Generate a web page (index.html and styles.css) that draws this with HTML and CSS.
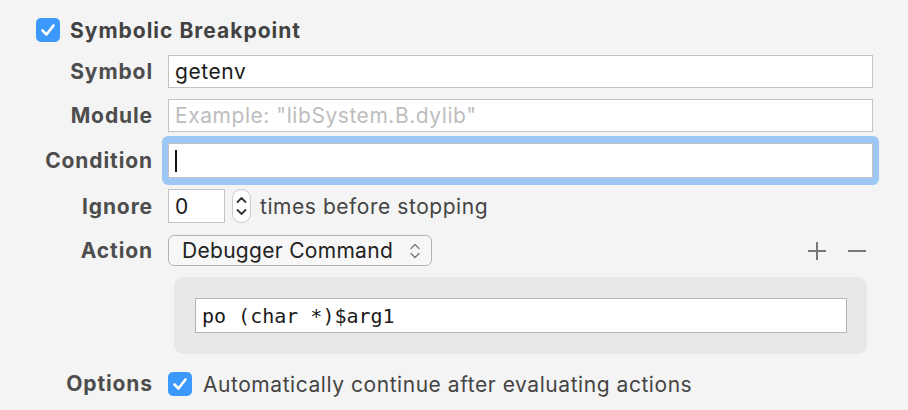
FILE: index.html
```html
<!DOCTYPE html>
<html>
<head>
<meta charset="utf-8">
<link rel="stylesheet" href="styles.css">
</head>
<body>
<div class="page">
  <div class="header">
    <span class="check"><svg viewBox="0 0 24 24" width="24" height="24"><path d="M6.5 12.5 L10.5 16.5 L17.5 7.5" fill="none" stroke="#fff" stroke-width="2.6" stroke-linecap="round" stroke-linejoin="round"/></svg></span>
    <span class="title">Symbolic Breakpoint</span>
  </div>
  <div class="form">
    <div class="label">Symbol</div>
    <div class="field">getenv</div>

    <div class="label">Module</div>
    <div class="field placeholder">Example: "libSystem.B.dylib"</div>

    <div class="label">Condition</div>
    <div class="focus"><div class="field tall"><span class="caret"></span></div></div>

    <div class="label">Ignore</div>
    <div class="ignore">
      <div class="field small">0</div>
      <div class="stepper"><svg viewBox="0 0 19 34" width="19" height="34"><path d="M5.5 13 L9.5 9 L13.5 13" fill="none" stroke="#333" stroke-width="1.8" stroke-linecap="round" stroke-linejoin="round"/><path d="M5.5 21 L9.5 25 L13.5 21" fill="none" stroke="#333" stroke-width="1.8" stroke-linecap="round" stroke-linejoin="round"/></svg></div>
      <span class="text">times before stopping</span>
    </div>

    <div class="label">Action</div>
    <div class="action">
      <div class="popup"><span>Debugger Command</span><svg viewBox="0 0 14 22" width="14" height="22"><path d="M3 8.5 L7 4.5 L11 8.5" fill="none" stroke="#777" stroke-width="1.3" stroke-linecap="round" stroke-linejoin="round"/><path d="M3 13.5 L7 17.5 L11 13.5" fill="none" stroke="#777" stroke-width="1.3" stroke-linecap="round" stroke-linejoin="round"/></svg></div>
      <div class="buttons">
        <svg viewBox="0 0 20 20" width="20" height="20"><path d="M10 1 V19 M1 10 H19" stroke="#777" stroke-width="2"/></svg>
        <svg viewBox="0 0 20 20" width="20" height="20"><path d="M1 10 H19" stroke="#777" stroke-width="2"/></svg>
      </div>
    </div>

    <div class="label"></div>
    <div class="box"><div class="field mono">po (char *)$arg1</div></div>

    <div class="label">Options</div>
    <div class="option">
      <span class="check"><svg viewBox="0 0 24 24" width="24" height="24"><path d="M6.5 12.5 L10.5 16.5 L17.5 7.5" fill="none" stroke="#fff" stroke-width="2.6" stroke-linecap="round" stroke-linejoin="round"/></svg></span>
      <span class="text">Automatically continue after evaluating actions</span>
    </div>
  </div>
</div>
</body>
</html>
```
FILE: styles.css
```css
html, body {
  margin: 0;
  padding: 0;
  background: #f4f4f4;
}
body {
  font-family: "Inter", "Liberation Sans", sans-serif;
  color: #4a4a4a;
}
.page {
  width: 908px;
  height: 410px;
  box-sizing: border-box;
  padding: 18px 35px 0 0;
}
.header {
  display: flex;
  align-items: center;
  gap: 10px;
  margin-left: 36px;
  height: 24px;
}
.check {
  width: 24px;
  height: 24px;
  border-radius: 5px;
  background: #3b99fc;
  display: block;
  flex: none;
}
.check svg { display: block; }
.title {
  font-size: 21px;
  font-weight: 700;
  color: #424242;
  letter-spacing: 1px;
}
.form {
  display: grid;
  grid-template-columns: 152px 1fr;
  column-gap: 16px;
  row-gap: 11px;
  align-items: center;
  margin-top: 13px;
}
.label {
  text-align: right;
  font-size: 21px;
  font-weight: 700;
  color: #4d4d4d;
  letter-spacing: 0.9px;
  margin-right: -1px;
}
.field {
  height: 33px;
  box-sizing: border-box;
  background: #fff;
  border: 1px solid #c3c3c3;
  font-size: 21px;
  letter-spacing: 0.55px;
  color: #1a1a1a;
  padding: 0 6px;
  display: flex;
  align-items: center;
}
.field.placeholder { color: #bdbdbd; }
.field.tall { height: 35px; }
.focus {
  margin: 0 -6px;
  border: 6px solid #9dc7f5;
  border-radius: 6px;
  margin-top: -7px;
  margin-bottom: -7px;
  border-top-width: 7px;
  border-bottom-width: 7px;
}
.caret {
  width: 2px;
  height: 22px;
  background: #111;
}
.ignore {
  display: flex;
  align-items: center;
  height: 34px;
}
.field.small {
  width: 57px;
  height: 34px;
}
.stepper {
  width: 19px;
  height: 34px;
  box-sizing: border-box;
  margin-left: 7px;
  border: 1px solid #cbcbcb;
  border-radius: 9px;
  background: #fff;
  position: relative;
}
.stepper svg {
  position: absolute;
  left: -1px;
  top: -1px;
}
.text {
  font-size: 21px;
  letter-spacing: 0.55px;
  color: #444;
  margin-left: 9px;
}
.option .text { margin-left: 11px; }
.action {
  display: flex;
  align-items: center;
  justify-content: space-between;
  margin-top: 1px;
}
.popup {
  width: 264px;
  height: 31px;
  box-sizing: border-box;
  border: 1px solid #b3b3b3;
  border-radius: 6px;
  background: #f7f7f7;
  display: flex;
  align-items: center;
  justify-content: space-between;
  padding: 0 9px 0 13px;
  font-size: 21px;
  letter-spacing: 0.3px;
  color: #222;
}
.popup svg { display: block; }
.buttons {
  display: flex;
  gap: 20px;
  margin-right: 6px;
}
.buttons svg { display: block; }
.box {
  margin: 0 6px;
  height: 77px;
  box-sizing: border-box;
  background: #e8e8e8;
  border-radius: 9px;
  padding: 21px 20px 0 21px;
}
.field.mono {
  height: 35px;
  font-family: "DejaVu Sans Mono", "Liberation Mono", monospace;
  font-size: 20px;
  letter-spacing: 0;
  padding-left: 6px;
  border-color: #b5b5b5;
}
.option {
  display: flex;
  align-items: center;
  height: 34px;
  margin-top: 2px;
}
```
